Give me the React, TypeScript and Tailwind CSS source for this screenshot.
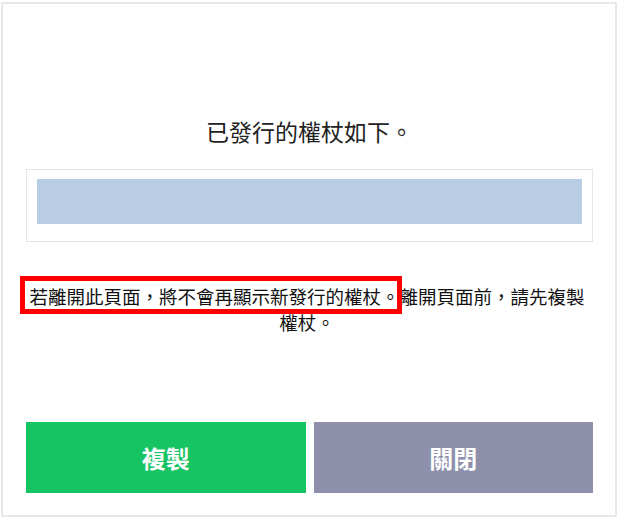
const FONT = "font-['Noto_Sans_CJK_TC','Noto_Sans',sans-serif]";

export default function App() {
  return (
    <div className={`relative w-[619px] h-[519px] bg-white ${FONT}`}>
      <div className="ml-[1px] mt-[2px] w-[616px] h-[515px] border-2 border-[#e8e8e8] pl-[23px] pr-[22px] pt-[111px] flex flex-col">
        {/* title */}
        <h1 className="text-center text-[23px] leading-[32px] text-[#222]">已發行的權杖如下。</h1>

        {/* token box */}
        <div className="mt-[22px] h-[73px] border border-[#e6e6e6] pt-[9px] px-[10px]">
          <div className="h-[45px] bg-[#b8cce4]" />
        </div>

        {/* notice */}
        <p className="mt-[41px] pr-[5px] text-center text-[18.5px] leading-[26px] text-[#111]">
          若離開此頁面，將不會再顯示新發行的權杖。離開頁面前，請先複製權杖。
        </p>

        {/* buttons */}
        <div className="mt-[87px] grid grid-cols-2 gap-[8px]">
          <button className="h-[71px] bg-[#17c463] text-white text-[24px] font-bold">複製</button>
          <button className="h-[71px] bg-[#8e90ab] text-white text-[24px] font-bold">關閉</button>
        </div>
      </div>

      {/* red annotation */}
      <div className="absolute left-[20px] top-[274px] w-[382px] h-[38px] border-[5px] border-[#ff0000]" />
    </div>
  );
}
